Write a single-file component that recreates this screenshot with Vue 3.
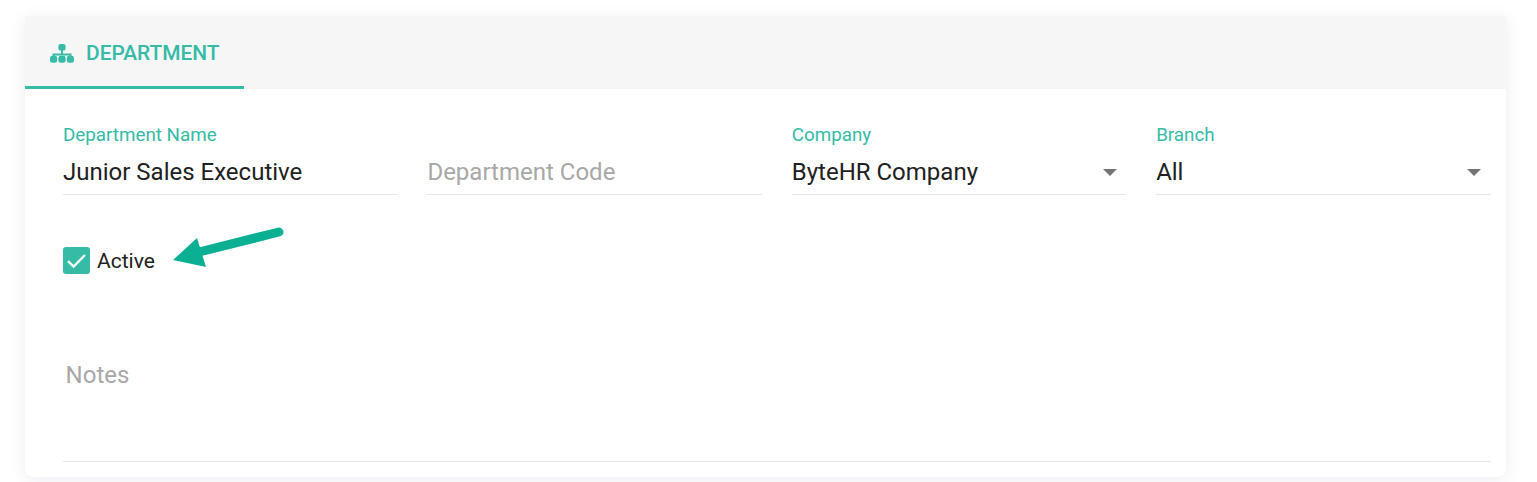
<script setup>
const fields = [
  { label: 'Department Name', value: 'Junior Sales Executive' },
  { placeholder: 'Department Code' },
  { label: 'Company', value: 'ByteHR Company', select: true },
  { label: 'Branch', value: 'All', select: true },
]
</script>

<template>
  <div class="page">
    <section class="card">
      <header class="card-head">
        <div class="tab">
          <svg class="tab-icon" viewBox="0 0 24 19" width="24" height="19">
            <path d="M12 2.5v8M3.5 14v-3.5h17V14" fill="none" stroke="#35bba6" stroke-width="2" />
            <rect x="8.4" y="0" width="7.2" height="6.6" rx="2.2" fill="#35bba6" />
            <rect x="0" y="11.8" width="7.2" height="7" rx="2.4" fill="#35bba6" />
            <rect x="8.4" y="11.8" width="7.2" height="7" rx="2.4" fill="#35bba6" />
            <rect x="16.8" y="11.8" width="7.2" height="7" rx="2.4" fill="#35bba6" />
          </svg>
          <span>DEPARTMENT</span>
        </div>
      </header>

      <div class="card-body">
        <div class="fields">
          <div v-for="f in fields" :key="f.label || f.placeholder" class="field">
            <label class="field-label">{{ f.label || '&nbsp;' }}</label>
            <div class="field-input">
              <span v-if="f.value" class="value">{{ f.value }}</span>
              <span v-else class="placeholder">{{ f.placeholder }}</span>
              <i v-if="f.select" class="caret"></i>
            </div>
          </div>
        </div>

        <div class="active-row">
          <span class="checkbox">
            <svg viewBox="0 0 27 27" width="27" height="27">
              <path d="M5 14.2l5.6 5.4L22 8" fill="none" stroke="#fff" stroke-width="2.4" />
            </svg>
          </span>
          <span class="active-label">Active</span>
        </div>

        <div class="notes">Notes</div>
      </div>

      <!-- flecha de anotación encima del formulario -->
      <svg class="arrow" viewBox="0 0 120 50" width="120" height="50">
        <path d="M22 27L106 6" fill="none" stroke="#0bb092" stroke-width="9" stroke-linecap="round" />
        <path d="M0 34L24 12l9 29z" fill="#0bb092" />
      </svg>
    </section>
  </div>
</template>

<style>
html,
body {
  background: #fff;
  overflow: hidden;
}
</style>

<style scoped>
.page {
  height: 482px;
  box-sizing: border-box;
  padding: 16px 31px 5px 25px;
  font-family: Roboto, "Liberation Sans", sans-serif;
}
.card {
  position: relative;
  height: 461px;
  background: #fff;
  border-radius: 0 0 8px 8px;
  box-shadow: 0 3px 16px rgba(120, 130, 160, 0.14);
}
.card-head {
  height: 73px;
  background: #f6f6f7;
  display: flex;
}
.tab {
  width: 219px;
  box-sizing: border-box;
  border-bottom: 3px solid #35bba6;
  display: flex;
  align-items: center;
  gap: 12px;
  padding: 4px 0 0 25px;
  color: #35bba6;
  font-size: 20.9px;
  font-weight: 500;
}
.tab-icon {
  flex: none;
}
.card-body {
  padding: 34px 15.5px 0 38px;
}
.fields {
  display: grid;
  grid-template-columns: repeat(4, 1fr);
  gap: 30px;
}
.field-label {
  display: block;
  height: 24px;
  line-height: 24px;
  color: #35bba6;
  font-size: 18.8px;
}
.field-input {
  height: 48px;
  box-sizing: border-box;
  padding-top: 3px;
  border-bottom: 1px solid #e6e6e6;
  display: flex;
  align-items: center;
  justify-content: space-between;
  font-size: 24px;
}
.value {
  color: #212121;
}
.placeholder {
  color: #a8a8a8;
}
.caret {
  width: 0;
  height: 0;
  margin-right: 9.5px;
  border-left: 7.25px solid transparent;
  border-right: 7.25px solid transparent;
  border-top: 7.25px solid #757575;
}
.active-row {
  display: flex;
  align-items: center;
  gap: 7px;
  margin-top: 52px;
}
.checkbox {
  width: 27px;
  height: 27px;
  border-radius: 3px;
  background: #35bba6;
  display: flex;
}
.active-label {
  color: #212121;
  font-size: 21px;
}
.notes {
  margin-top: 87px;
  padding: 0 0 72px 2.6px;
  line-height: 28px;
  border-bottom: 1px solid #e6e6e6;
  color: #a8a8a8;
  font-size: 24px;
}
.arrow {
  position: absolute;
  left: 148px;
  top: 210px;
}
</style>
